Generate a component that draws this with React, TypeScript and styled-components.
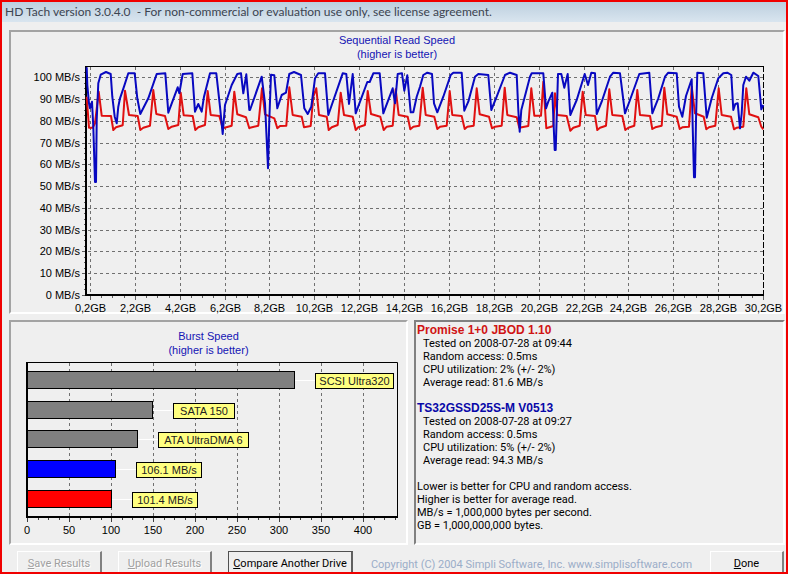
import React from "react";
import styled, { createGlobalStyle } from "styled-components";

const GlobalStyle = createGlobalStyle`
  * { box-sizing: border-box; }
  body { margin: 0; background: #efefef; }
`;

const chartFont = `"Liberation Sans", Arial, sans-serif`;
const uiFont = `Roboto, "Liberation Sans", sans-serif`;

const Window = styled.main`
  height: 100vh;
  overflow: hidden;
  border: 2px solid #f00000;
  background: #efefef;
  color: #000;
  font: 11px/13px ${uiFont};
`;

const TitleBar = styled.header`
  height: 20px;
  padding-left: 3px;
  background: linear-gradient(#bccfdf, #d9e5ef);
  color: #3c4450;
  font: 12px/20px Lato, "Noto Sans", sans-serif;
  white-space: pre;
`;

const Content = styled.div`
  display: grid;
  gap: 6px;
  padding: 8px 1px 0 7px;
`;

const Columns = styled.div`
  display: grid;
  grid-template-columns: 399fr 371fr;
  gap: 6px;
`;

const ChartPanel = styled.figure`
  margin: 0;
  border: 2px solid;
  border-color: #a3a3a3 #fff #fff #a3a3a3;
  font-family: ${chartFont};
`;

const ChartTitle = styled.figcaption<{ $roomy?: boolean }>`
  padding: ${(p) => (p.$roomy ? 7 : 1)}px 0 ${(p) => (p.$roomy ? 0 : 1)}px;
  color: #1414b4;
  line-height: 14px;
  text-align: center;
`;

const Plot = styled.svg`
  display: block;
  width: 100%;
  height: auto;
  overflow: visible;
  font: 11px ${chartFont};
`;

const Results = styled.section`
  padding: 2px 1px 0;
  border: 2px solid;
  border-color: #808080 #fff #fff #808080;
`;

const Drive = styled.section`
  margin-bottom: 13px;
`;

const DriveName = styled.h2<{ $color: string }>`
  margin: 0;
  color: ${(p) => p.$color};
  font: bold 12px/13px ${chartFont};
`;

const Lines = styled.ul<{ $indent?: boolean }>`
  margin: 0;
  padding: 0 0 0 ${(p) => (p.$indent ? 6 : 0)}px;
  list-style: none;
`;

const Footer = styled.footer`
  display: flex;
  align-items: flex-start;
  padding: 0 1px 0 8px;
`;

const Button = styled.button<{ $width: number; $default?: boolean }>`
  flex: none;
  width: ${(p) => p.$width}px;
  height: 25px;
  margin-right: ${(p) => (p.$default ? 0 : 16)}px;
  padding: 0;
  border: solid;
  border-width: 1px 2px 2px 1px;
  border-color: ${(p) => (p.$default ? "#505050 #606060 #606060 #505050" : "#fff #808080 #808080 #fff")};
  background: #efefef;
  color: #000;
  font: 11px/13px ${uiFont};
  white-space: nowrap;

  &:disabled {
    color: #a0a0a0;
    text-shadow: 1px 1px #fff;
  }
  &:last-child { margin-right: 0; }
`;

const Copyright = styled.small`
  flex: 1;
  padding-top: 7px;
  color: #9badc8;
  font: 11px/14px ${uiFont};
  text-align: center;
  white-space: nowrap;
`;

type Point = [number, number];
type Run = { start: number; points: Point[] };

/* Samples are stored per run, three units to one chart unit. */
const toPath = (runs: Run[]) =>
  runs
    .flatMap((r) => r.points.map(([x, y]) => `${(r.start + x / 3).toFixed(1)},${(60 + y / 3).toFixed(1)}`))
    .join(" ");

const blueRuns: Run[] = [
  { start: 80, points: [[20,22],[22,75],[27,130],[30,145],[36,125],[40,200],[45,366],[48,366],[50,180],[55,70],[62,44],[78,36],[92,42],[97,110],[104,170],[110,190],[115,140],[120,115],[132,80],[145,40],[164,40],[172,115],[181,162],[205,115],[230,42],[256,40],[265,158],[293,82],[298,100],[308,42],[337,40],[345,155],[355,132],[365,155],[372,110],[390,40],[409,40],[420,140],[428,222],[435,135],[455,75],[472,42],[483,40],[490,100],[499,43],[508,150]] },
  { start: 250, points: [[0,150],[35,50],[45,130],[54,325],[58,180],[63,44],[73,46],[82,145],[95,105],[108,98],[118,42],[132,36],[153,45],[163,145],[173,162],[184,140],[195,55],[205,40],[225,40],[235,165],[278,40],[289,42],[297,132],[308,42],[317,160],[352,66],[359,66],[370,40],[389,40],[400,160],[428,85],[435,130],[443,42],[456,40],[463,92],[472,46],[482,157],[490,157],[500,110]] },
  { start: 420, points: [[0,80],[10,45],[22,38],[36,42],[42,130],[52,157],[70,110],[92,45],[100,38],[125,38],[133,152],[145,125],[165,50],[175,42],[205,45],[214,150],[230,110],[255,45],[270,38],[290,45],[295,150],[299,215],[304,150],[330,50],[335,40],[370,40],[378,145],[385,125],[397,98],[404,270],[407,270],[414,42],[424,42],[433,83],[443,42],[451,165],[470,120],[494,42],[504,75]] },
  { start: 590, points: [[4,38],[15,40],[20,162],[35,125],[60,50],[70,38],[90,40],[105,160],[120,120],[148,42],[178,38],[187,160],[205,115],[225,50],[235,38],[260,40],[267,140],[277,170],[288,108],[305,58],[308,200],[312,352],[315,352],[318,180],[322,38],[340,40],[350,173],[365,115],[385,55],[400,40],[412,38],[424,45],[430,150],[436,132],[443,130],[450,205],[455,160],[460,75],[468,50],[478,62],[490,38],[505,48],[514,148],[520,135]] },
];

const redRuns: Run[] = [
  { start: 80, points: [[20,110],[27,203],[38,203],[45,190],[56,95],[65,167],[93,168],[100,210],[108,202],[128,196],[135,92],[147,165],[173,168],[181,210],[190,203],[210,197],[220,90],[229,162],[255,168],[265,207],[275,200],[295,195],[302,98],[311,166],[338,168],[346,210],[355,202],[375,195],[383,93],[392,165],[418,168],[428,205],[455,197],[463,95],[472,163],[498,172],[508,205]] },
  { start: 250, points: [[0,203],[25,197],[36,85],[45,163],[73,175],[82,205],[90,198],[109,197],[118,82],[128,165],[155,170],[162,202],[182,198],[190,110],[199,85],[207,165],[230,170],[236,210],[245,202],[263,195],[272,98],[282,165],[308,170],[317,210],[325,202],[345,195],[353,93],[363,162],[391,170],[401,210],[410,200],[428,197],[437,88],[446,165],[473,170],[481,208],[490,200],[508,197]] },
  { start: 420, points: [[8,83],[17,165],[43,170],[52,207],[60,200],[80,197],[89,93],[97,165],[125,168],[134,207],[142,200],[161,197],[170,85],[179,163],[207,170],[216,205],[225,200],[245,197],[254,83],[262,165],[290,172],[298,203],[325,198],[334,85],[343,167],[363,167],[370,65],[379,205],[400,198],[405,100],[412,165],[440,168],[451,212],[460,203],[479,197],[488,95],[497,165]] },
  { start: 590, points: [[15,168],[22,210],[30,203],[48,197],[58,88],[67,165],[97,168],[106,210],[115,203],[133,197],[142,90],[150,165],[180,168],[187,207],[196,202],[215,197],[223,83],[232,163],[260,170],[269,207],[277,202],[297,200],[305,80],[315,160],[341,170],[349,208],[357,202],[376,197],[386,85],[395,165],[423,170],[432,208],[440,203],[460,200],[469,85],[478,163],[505,172],[514,200],[520,208]] },
];

const range = (n: number) => Array.from({ length: n }, (_, i) => i);
const crisp = (n: number) => Math.floor(n) + 0.5;
const speedY = (v: number) => crisp(295.4 - v * 2.177);
const capacityX = (i: number) => crisp(90.5 + (i * 673) / 15);

function ReadSpeedChart() {
  return (
    <Plot viewBox="11 62 772 250" role="img" aria-label="Sequential read speed by position">
      <g stroke="#707070" strokeDasharray="3 3">
        {range(10).map((i) => (
          <line key={i} x1="88" x2="763" y1={speedY(i * 10 + 10)} y2={speedY(i * 10 + 10)} />
        ))}
        {range(15).map((i) => (
          <line key={i} x1={capacityX(i)} x2={capacityX(i)} y1="67" y2="294" />
        ))}
      </g>
      <path d="M86 66.5H764" stroke="#000" />
      <path d="M763.5 66V295" stroke="#000" strokeDasharray="6 2" />
      <g stroke="#606060">
        {range(11).map((i) => (
          <line key={i} x1="82" x2="86" y1={speedY(i * 10)} y2={speedY(i * 10)} />
        ))}
        {range(42).map((i) => (
          <line key={i} x1="84" x2="86" y1={speedY(i * 2.5)} y2={speedY(i * 2.5)} />
        ))}
        {range(16).map((i) => (
          <line key={i} x1={capacityX(i)} x2={capacityX(i)} y1="296" y2="300" />
        ))}
        {range(61).map((i) => (
          <line key={i} x1={capacityX(i / 4)} x2={capacityX(i / 4)} y1="296" y2="298" />
        ))}
      </g>
      <path d="M86 66V295H764" fill="none" stroke="#000" strokeWidth="2" />
      <polyline points={toPath(redRuns)} fill="none" stroke="#e01010" strokeWidth="2" strokeLinejoin="round" />
      <polyline points={toPath(blueRuns)} fill="none" stroke="#0808c0" strokeWidth="2" strokeLinejoin="round" />
      <g textAnchor="end">
        {range(11).map((i) => (
          <text key={i} x="80" y={speedY(i * 10) + 3.5}>{i * 10} MB/s</text>
        ))}
      </g>
      <g textAnchor="middle">
        {range(16).map((i) => (
          <text key={i} x={capacityX(i)} y="312">{i * 2},2GB</text>
        ))}
      </g>
    </Plot>
  );
}

const bursts = [
  { name: "SCSI Ultra320", fill: "#808080", top: 371, end: 294, tag: 315, tagWidth: 78 },
  { name: "SATA 150", fill: "#808080", top: 401, end: 152, tag: 173, tagWidth: 61 },
  { name: "ATA UltraDMA 6", fill: "#808080", top: 430, end: 137, tag: 158, tagWidth: 90 },
  { name: "106.1 MB/s", fill: "#0000ff", top: 460, end: 115, tag: 136, tagWidth: 65 },
  { name: "101.4 MB/s", fill: "#ff0000", top: 490, end: 111, tag: 132, tagWidth: 65 },
];

function BurstChart() {
  return (
    <Plot viewBox="11 357 395 186" role="img" aria-label="Burst speed by drive">
      <g stroke="#707070" strokeDasharray="3 3">
        {range(8).map((i) => (
          <line key={i} x1={69.5 + i * 42} x2={69.5 + i * 42} y1="363" y2="516" />
        ))}
      </g>
      <g stroke="#404040">
        {range(9).map((i) => (
          <line key={i} x1={27.5 + i * 42} x2={27.5 + i * 42} y1="517" y2="522" />
        ))}
        {range(36).map((i) => (
          <line key={i} x1={crisp(27.5 + i * 10.5)} x2={crisp(27.5 + i * 10.5)} y1="517" y2="520" />
        ))}
      </g>
      <path d="M27 362.5H397.5V517" fill="none" stroke="#000" />
      {bursts.map((b) => (
        <g key={b.name} stroke="#000">
          <path d={`M${b.end} ${b.top + 9.5}H${b.tag}`} stroke="#fff" />
          <rect x="27.5" y={b.top + 0.5} width={b.end - 27} height="17" fill={b.fill} />
          <rect x={b.tag + 0.5} y={b.top + 2.5} width={b.tagWidth} height="15" fill="#ffff80" />
          <text x={b.tag + b.tagWidth / 2 + 0.5} y={b.top + 14} textAnchor="middle" fill="#222" stroke="none">
            {b.name}
          </text>
        </g>
      ))}
      <path d="M27 362V517H398" fill="none" stroke="#000" strokeWidth="2" />
      <g textAnchor="middle">
        {range(9).map((i) => (
          <text key={i} x={27 + i * 42} y="534">{i * 50}</text>
        ))}
      </g>
    </Plot>
  );
}

const drives = [
  {
    name: "Promise 1+0 JBOD 1.10",
    color: "#d01414",
    facts: ["Tested on 2008-07-28 at 09:44", "Random access: 0.5ms", "CPU utilization: 2% (+/- 2%)", "Average read: 81.6 MB/s"],
  },
  {
    name: "TS32GSSD25S-M V0513",
    color: "#0808a8",
    facts: ["Tested on 2008-07-28 at 09:27", "Random access: 0.5ms", "CPU utilization: 5% (+/- 2%)", "Average read: 94.3 MB/s"],
  },
];

const notes = [
  "Lower is better for CPU and random access.",
  "Higher is better for average read.",
  "MB/s = 1,000,000 bytes per second.",
  "GB = 1,000,000,000 bytes.",
];

export default function App() {
  return (
    <>
      <GlobalStyle />
      <Window>
        <TitleBar>{"HD Tach version 3.0.4.0  - For non-commercial or evaluation use only, see license agreement."}</TitleBar>
        <Content>
          <ChartPanel>
            <ChartTitle>Sequential Read Speed<br />(higher is better)</ChartTitle>
            <ReadSpeedChart />
          </ChartPanel>
          <Columns>
            <ChartPanel>
              <ChartTitle $roomy>Burst Speed<br />(higher is better)</ChartTitle>
              <BurstChart />
            </ChartPanel>
            <Results>
              {drives.map((d) => (
                <Drive key={d.name}>
                  <DriveName $color={d.color}>{d.name}</DriveName>
                  <Lines $indent>{d.facts.map((f) => <li key={f}>{f}</li>)}</Lines>
                </Drive>
              ))}
              <Lines>{notes.map((n) => <li key={n}>{n}</li>)}</Lines>
            </Results>
          </Columns>
          <Footer>
            <Button $width={85} disabled><u>S</u>ave Results</Button>
            <Button $width={94} disabled><u>U</u>pload Results</Button>
            <Button $width={125} $default><u>C</u>ompare Another Drive</Button>
            <Copyright>Copyright (C) 2004 Simpli Software, Inc. www.simplisoftware.com</Copyright>
            <Button $width={74}><u>D</u>one</Button>
          </Footer>
        </Content>
      </Window>
    </>
  );
}
